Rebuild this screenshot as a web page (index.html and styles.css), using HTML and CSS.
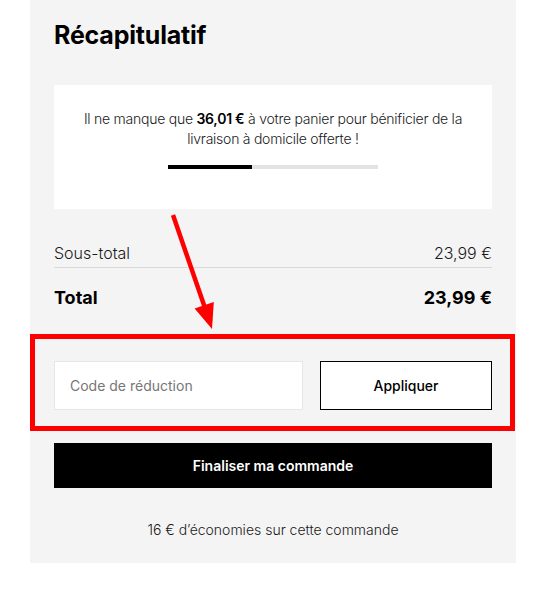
FILE: index.html
```html
<!DOCTYPE html>
<html lang="fr">
<head>
<meta charset="utf-8">
<title>Récapitulatif</title>
<link rel="stylesheet" href="styles.css">
</head>
<body>
<div class="page">
  <aside class="summary">
    <h1 class="summary-title">Récapitulatif</h1>
    <div class="shipping-card">
      <p class="shipping-text">Il ne manque que <strong>36,01&nbsp;€</strong> à votre panier pour bénificier de la livraison à domicile offerte !</p>
      <div class="progress"><div class="progress-fill" style="width:40%"></div></div>
    </div>
    <div class="row subtotal">
      <span>Sous-total</span>
      <span>23,99 €</span>
    </div>
    <div class="row total">
      <span>Total</span>
      <span>23,99 €</span>
    </div>
    <form class="promo" onsubmit="return false">
      <input class="promo-input" type="text" placeholder="Code de réduction">
      <button class="promo-btn" type="button">Appliquer</button>
    </form>
    <button class="checkout-btn" type="button">Finaliser ma commande</button>
    <p class="savings">16 € d’économies sur cette commande</p>
  </aside>
  <div class="highlight-box"></div>
  <svg class="highlight-arrow" width="537" height="591" viewBox="0 0 537 591" aria-hidden="true">
    <line x1="173" y1="215" x2="205" y2="308" stroke="#ff0000" stroke-width="4.5"/>
    <polygon points="194.6,308.6 213.8,302 212,329" fill="#ff0000"/>
  </svg>
</div>
</body>
</html>
```

FILE: styles.css
```css
* { box-sizing: border-box; }

html, body {
  margin: 0;
  padding: 0;
  background: #ffffff;
}

body {
  font-family: Inter, "Noto Sans", "Liberation Sans", sans-serif;
  color: #1a1a1a;
  width: 537px;
  height: 591px;
  overflow: hidden;
}

.page {
  position: relative;
  width: 537px;
  height: 591px;
}

.summary {
  margin-left: 30px;
  width: 486px;
  height: 563px;
  background: #f4f4f4;
  padding: 21px 24px 0 24px;
  display: flex;
  flex-direction: column;
}

.summary-title {
  margin: 0;
  font-size: 25px;
  line-height: 29px;
  font-weight: 700;
  color: #000;
  letter-spacing: -0.2px;
}

.shipping-card {
  margin-top: 35px;
  background: #ffffff;
  height: 124px;
  padding: 24px 18px 0 18px;
  display: flex;
  flex-direction: column;
  align-items: center;
}

.shipping-text {
  margin: 0;
  font-size: 14px;
  line-height: 20px;
  font-weight: 300;
  letter-spacing: -0.25px;
  text-align: center;
  color: #1a1a1a;
}

.shipping-text strong {
  font-weight: 600;
  color: #000;
}

.progress {
  margin-top: 16px;
  width: 210px;
  height: 4px;
  background: #e3e3e3;
}

.progress-fill {
  height: 100%;
  background: #000;
}

.row {
  display: flex;
  justify-content: space-between;
  align-items: baseline;
}

.subtotal {
  margin-top: 34px;
  font-size: 16px;
  line-height: 20px;
  font-weight: 300;
  padding-bottom: 4px;
  border-bottom: 1px solid #d9d9d9;
}

.total {
  padding-top: 18px;
  font-size: 18px;
  line-height: 24px;
  font-weight: 700;
  color: #000;
}

.promo {
  margin: 51px 0 0 0;
  display: flex;
  gap: 17px;
  height: 49px;
}

.promo-input {
  flex: 1;
  min-width: 0;
  height: 49px;
  border: 1px solid #e6e6e6;
  background: #fff;
  padding: 0 15px;
  font-family: inherit;
  font-size: 14px;
  color: #1a1a1a;
  outline: none;
}

.promo-input::placeholder {
  color: #767676;
  opacity: 1;
}

.promo-btn {
  width: 172px;
  height: 49px;
  border: 1px solid #000;
  background: #fff;
  font-family: inherit;
  font-size: 14px;
  font-weight: 500;
  color: #000;
  padding: 0;
}

.checkout-btn {
  margin-top: 33px;
  width: 100%;
  height: 45px;
  border: 0;
  background: #000;
  color: #fff;
  font-family: inherit;
  font-size: 14px;
  font-weight: 600;
  padding: 0;
}

.savings {
  margin: 32px 0 0 0;
  font-size: 14px;
  line-height: 20px;
  font-weight: 300;
  text-align: center;
  color: #1a1a1a;
}

.highlight-box {
  position: absolute;
  left: 30px;
  top: 334px;
  width: 485px;
  height: 97px;
  border: 5px solid #ff0000;
  pointer-events: none;
}

.highlight-arrow {
  position: absolute;
  left: 0;
  top: 0;
  pointer-events: none;
}
```
